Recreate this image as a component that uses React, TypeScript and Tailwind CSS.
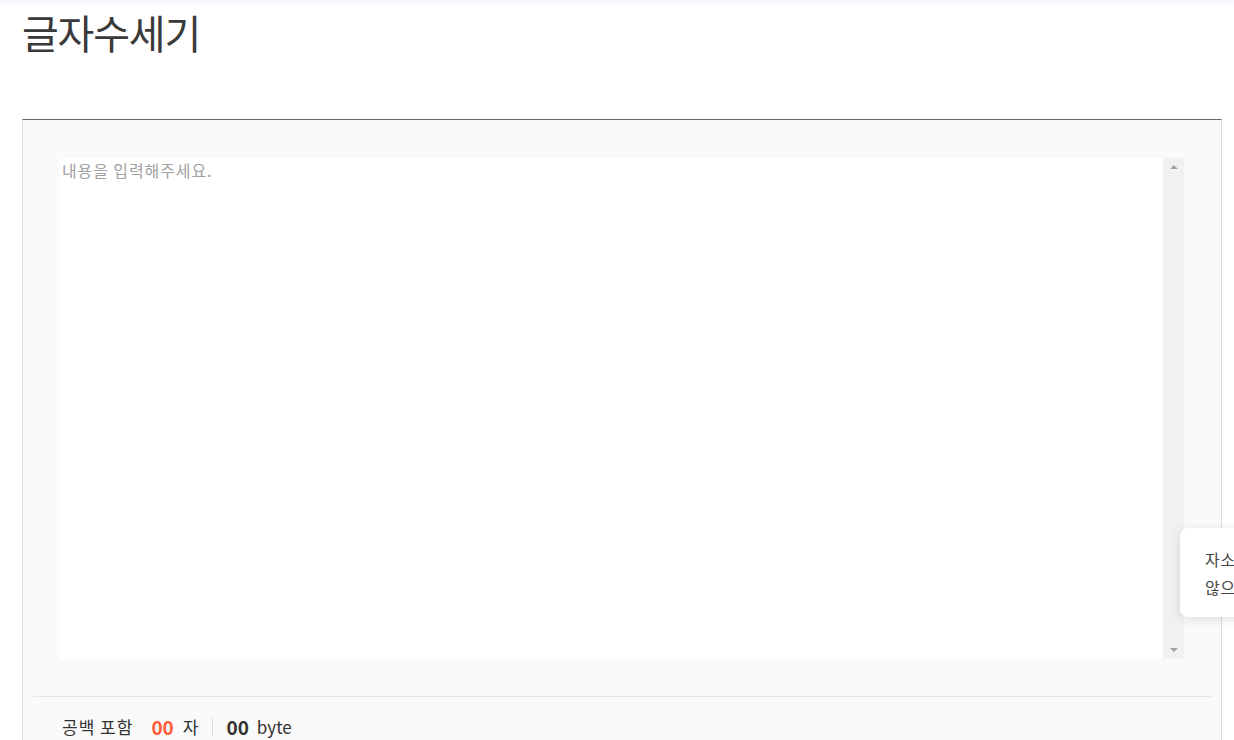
import { useState } from "react";

const KR = "font-['Noto_Sans_CJK_KR','Noto_Sans',sans-serif]";

export default function App() {
  const [text, setText] = useState("");
  const count = text.length;
  const bytes = new TextEncoder().encode(text).length;
  const pad = (n: number) => String(n).padStart(2, "0");

  return (
    <div className={`relative w-full h-[740px] overflow-hidden bg-white text-[#333] ${KR}`}>
      {/* top strip */}
      <div className="h-[8px] bg-gradient-to-b from-[#f3f6fd] to-white" />

      {/* title */}
      <h1 className="pl-[22px] text-[40px] leading-[48px] font-normal text-[#3a3a3a] tracking-[-1.2px]">
        글자수세기
      </h1>

      {/* counter box */}
      <div className="mt-[63px] ml-[22px] w-[1200px] border-t border-t-[#666] border-x border-x-[#ddd] bg-[#fafafa]">
        <div className="px-[37px] pt-[38px] pb-[37px]">
          <div className="flex h-[501px] bg-white">
            <textarea
              value={text}
              onChange={(e) => setText(e.target.value)}
              placeholder="내용을 입력해주세요."
              className="flex-1 resize-none overflow-hidden bg-white px-[2px] pt-0 text-[16px] leading-[24px] tracking-[0.9px] text-[#333] placeholder:text-[#a0a0a0] outline-none"
            />
            {/* scrollbar */}
            <div className="flex w-[21px] flex-col items-center justify-between bg-[#f1f1f1] py-[7px]">
              <div className="h-0 w-0 border-x-[4px] border-b-[4px] border-x-transparent border-b-[#a3a3a3]" />
              <div className="h-0 w-0 border-x-[4px] border-t-[4px] border-x-transparent border-t-[#a3a3a3]" />
            </div>
          </div>
        </div>

        <div className="mx-[10px] border-t border-[#e6e6e6]" />

        {/* footer */}
        <div className="flex items-center pl-[39px] pt-[18px] pb-[20px] text-[17px] leading-[24px]">
          <span className="tracking-[1px] text-[#333]">공백 포함</span>
          <span className="ml-[18px] font-bold text-[19px] text-[#ff5b35]">{pad(count)}</span>
          <span className="ml-[9px] text-[#333]">자</span>
          <span className="ml-[14px] mr-[13px] h-[18px] w-px bg-[#ddd]" />
          <span className="font-bold text-[19px] text-[#333]">{pad(bytes)}</span>
          <span className="ml-[8px] text-[#333]">byte</span>
        </div>
      </div>

      {/* floating tip */}
      <div className="absolute left-[1180px] top-[528px] w-[300px] rounded-[8px] bg-white pl-[25px] pt-[17px] pb-[16px] text-[16px] leading-[28px] tracking-[0.6px] text-[#444] shadow-[0_2px_12px_rgba(0,0,0,0.12)]">
        <p className="whitespace-nowrap">자소서 글자수는 공백을 포함하는지</p>
        <p className="whitespace-nowrap">않으면 확인해 주세요.</p>
      </div>
    </div>
  );
}
